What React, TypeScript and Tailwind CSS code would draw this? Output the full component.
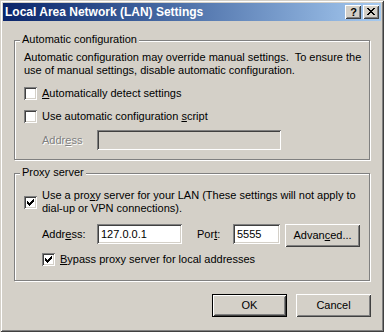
import React from "react";

const sunken =
  "shadow-[inset_1px_1px_0_#808080,inset_-1px_-1px_0_#ffffff,inset_2px_2px_0_#404040,inset_-2px_-2px_0_#d4d0c8]";
const raised =
  "shadow-[inset_1px_1px_0_#ffffff,inset_-1px_-1px_0_#404040,inset_2px_2px_0_#d4d0c8,inset_-2px_-2px_0_#808080]";

function Check({ checked }: { checked?: boolean }) {
  return (
    <div className={`relative w-[13px] h-[13px] shrink-0 bg-white ${sunken}`}>
      {checked && (
        <svg width="13" height="13" viewBox="0 0 13 13" className="absolute left-0 top-0" shapeRendering="crispEdges">
          <rect x="3" y="5" width="1" height="3" fill="#000" />
          <rect x="4" y="6" width="1" height="3" fill="#000" />
          <rect x="5" y="7" width="1" height="3" fill="#000" />
          <rect x="6" y="6" width="1" height="3" fill="#000" />
          <rect x="7" y="5" width="1" height="3" fill="#000" />
          <rect x="8" y="4" width="1" height="3" fill="#000" />
          <rect x="9" y="3" width="1" height="3" fill="#000" />
        </svg>
      )}
    </div>
  );
}

function Group({ label, h, children }: { label: string; h: string; children: React.ReactNode }) {
  return (
    <div
      className={`relative w-[356px] ${h} border border-[#808080] shadow-[inset_1px_1px_0_#ffffff,1px_1px_0_#ffffff]`}
    >
      <span className="absolute left-[5px] top-[-8px] px-[2px] bg-[#d4d0c8] leading-[13px] whitespace-nowrap">
        {label}
      </span>
      {children}
    </div>
  );
}

export default function App() {
  return (
    <div
      className="w-[384px] h-[332px] bg-[#d4d0c8] p-[3px] flex flex-col text-[11px] leading-[13px] text-black font-['Liberation_Sans',Arial,sans-serif] shadow-[inset_1px_1px_0_#d4d0c8,inset_-1px_-1px_0_#404040,inset_2px_2px_0_#ffffff,inset_-2px_-2px_0_#808080] overflow-hidden"
    >
      {/* Title bar */}
      <div className="h-[18px] shrink-0 flex items-center pl-[2px] pr-[2px] bg-gradient-to-r from-[#0a246a] to-[#a6caf0]">
        <span className="text-white font-bold text-[12px] whitespace-nowrap">
          Local Area Network (LAN) Settings
        </span>
        <div className="ml-auto flex items-center gap-[2px]">
          <div className={`w-[16px] h-[14px] bg-[#d4d0c8] ${raised} flex items-center justify-center`}>
            <span className="font-bold text-[11px] leading-[11px] pl-[1px]">?</span>
          </div>
          <div className={`w-[16px] h-[14px] bg-[#d4d0c8] ${raised} flex items-center justify-center`}>
            <svg width="16" height="14" viewBox="0 0 16 14" shapeRendering="crispEdges">
              <path d="M4 3 L11 10 M5 3 L12 10 M11 3 L4 10 M12 3 L5 10" stroke="#000" strokeWidth="1" fill="none" />
            </svg>
          </div>
        </div>
      </div>

      {/* Body */}
      <div className="pl-[11px] pt-[19px] flex flex-col">
        <Group label="Automatic configuration" h="h-[120px]">
          <div className="pl-[9px] pt-[10px] flex flex-col">
            <div className="whitespace-nowrap">
              Automatic configuration may override manual settings.&nbsp; To ensure the
            </div>
            <div className="whitespace-nowrap">use of manual settings, disable automatic configuration.</div>
            <div className="mt-[10px] flex items-center gap-[5px]">
              <Check />
              <span className="whitespace-nowrap">
                <u>A</u>utomatically detect settings
              </span>
            </div>
            <div className="mt-[10px] flex items-center gap-[5px]">
              <Check />
              <span className="whitespace-nowrap">
                Use automatic configuration <u>s</u>cript
              </span>
            </div>
            <div className="mt-[7px] flex items-center">
              <span className="w-[73px] shrink-0 pl-[18px] text-[#808080] [text-shadow:1px_1px_0_#ffffff] whitespace-nowrap">
                Addr<u>e</u>ss
              </span>
              <div className={`w-[184px] h-[20px] bg-[#d4d0c8] ${sunken}`} />
            </div>
          </div>
        </Group>

        <div className="mt-[13px]">
          <Group label="Proxy server" h="h-[108px]">
            <div className="pl-[9px] pt-[15px] flex flex-col">
              <div className="flex items-center gap-[5px]">
                <Check checked />
                <div className="flex flex-col">
                  <span className="whitespace-nowrap">
                    Use a pro<u>x</u>y server for your LAN (These settings will not apply to
                  </span>
                  <span className="whitespace-nowrap">dial-up or VPN connections).</span>
                </div>
              </div>
              <div className="mt-[9px] flex items-start">
                <span className="w-[73px] shrink-0 pl-[18px] pt-[4px] whitespace-nowrap">
                  Addr<u>e</u>ss:
                </span>
                <div className={`w-[85px] h-[20px] bg-white ${sunken} flex items-center pl-[4px]`}>
                  127.0.0.1
                </div>
                <span className="w-[51px] shrink-0 pl-[15px] pt-[4px] whitespace-nowrap">
                  Por<u>t</u>:
                </span>
                <div className={`w-[47px] h-[20px] bg-white ${sunken} flex items-center pl-[4px]`}>
                  5555
                </div>
                <div
                  className={`ml-[5px] w-[75px] h-[23px] bg-[#d4d0c8] ${raised} flex items-center justify-center whitespace-nowrap`}
                >
                  Advan<u>c</u>ed...
                </div>
              </div>
              <div className="mt-[6px] pl-[18px] flex items-center gap-[5px]">
                <Check checked />
                <span className="whitespace-nowrap">
                  <u>B</u>ypass proxy server for local addresses
                </span>
              </div>
            </div>
          </Group>
        </div>

        <div className="mt-[13px] w-[357px] flex justify-end gap-[9px]">
          <div className="w-[75px] h-[23px] border border-black">
            <div className={`w-full h-full bg-[#d4d0c8] ${raised} flex items-center justify-center`}>OK</div>
          </div>
          <div className={`w-[75px] h-[23px] bg-[#d4d0c8] ${raised} flex items-center justify-center`}>
            Cancel
          </div>
        </div>
      </div>
    </div>
  );
}
